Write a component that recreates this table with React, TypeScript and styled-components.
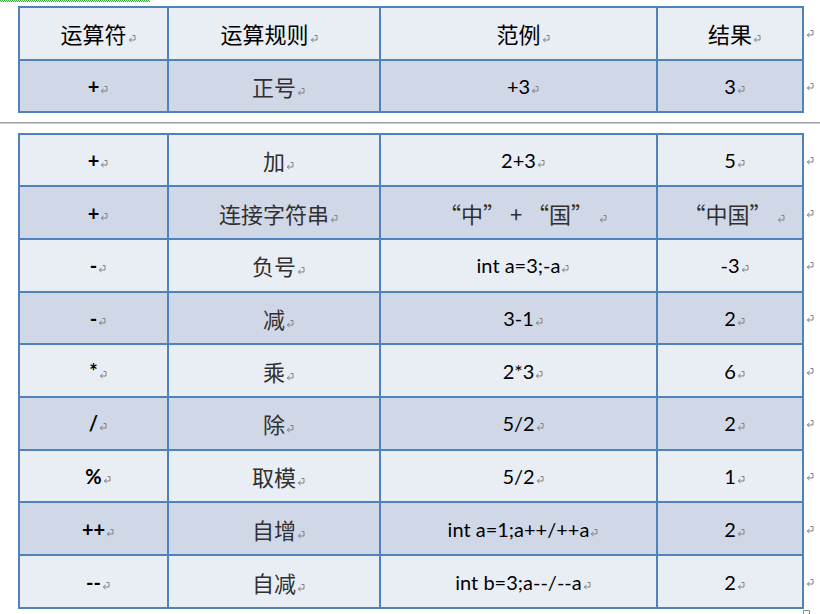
import React from 'react';
import styled, { createGlobalStyle } from 'styled-components';

const Global = createGlobalStyle`
  html, body { margin: 0; padding: 0; background: #ffffff; }
  body {
    width: 820px;
    height: 614px;
    overflow: hidden;
    font-family: Lato, "Noto Sans CJK SC", sans-serif;
  }
`;

const LIGHT = '#e9edf4';
const DARK = '#d0d8e8';
const BORDER = '#4f81bd';
const ROW_H = '50.7px';

const Page = styled.div`
  display: flex;
  flex-direction: column;
  width: 820px;
  height: 614px;
  overflow: hidden;
  & > * { flex-shrink: 0; }
`;

const Squiggle = styled.div`
  width: 150px;
  height: 2px;
  background:
    repeating-linear-gradient(90deg, #3fa63f 0 1px, #cfe9c6 1px 2px) top left / 100% 1px no-repeat,
    repeating-linear-gradient(90deg, #cfe9c6 0 1px, #3fa63f 1px 2px) bottom left / 100% 1px no-repeat;
`;

const TableBlock = styled.div<{ $top: number }>`
  display: flex;
  align-items: flex-start;
  margin-left: 18px;
  margin-top: ${(p) => p.$top}px;
`;

const Grid = styled.div`
  display: grid;
  grid-template-columns: 147px 210px 275px 144px;
  grid-auto-rows: ${ROW_H};
  gap: 2px;
  padding: 2px;
  background: ${BORDER};
`;

const Cell = styled.div<{ $dark: boolean; $nudge?: number }>`
  display: flex;
  align-items: center;
  justify-content: center;
  background: ${(p) => (p.$dark ? DARK : LIGHT)};
  padding-right: ${(p) => p.$nudge ?? 0}px;
  white-space: nowrap;
`;

const MarkCol = styled.div`
  display: grid;
  grid-auto-rows: ${ROW_H};
  gap: 2px;
  padding: 2px 0 2px 1px;
`;

const MarkSlot = styled.div`
  display: flex;
  align-items: center;
  padding-top: 2px;
`;

const Cjk = styled.span<{ $head?: boolean }>`
  font-family: "Noto Sans CJK SC", sans-serif;
  font-size: 22px;
  line-height: 1;
  font-weight: 400;
  color: ${(p) => (p.$head ? '#000000' : '#303030')};
`;

const Latin = styled.span<{ $bold?: boolean }>`
  font-family: Lato, "Noto Sans CJK SC", sans-serif;
  font-size: 20px;
  line-height: 1;
  font-weight: ${(p) => (p.$bold ? 700 : 400)};
  color: #000000;
`;

const MarkHolder = styled.span`
  display: inline-block;
  width: 0;
  white-space: nowrap;
  vertical-align: baseline;
`;

const MarkSvg = styled.svg`
  display: inline-block;
  margin-left: 1px;
  vertical-align: baseline;
`;

const Break = styled.div`
  height: 2px;
  margin: 8.6px 0 8.7px;
  background: linear-gradient(#9e9ea6 0 1px, #c9c9cf 1px 2px);
`;

const EndRow = styled.div`
  padding-left: 803px;
  margin-top: 1px;
  display: flex;
`;

const ReturnIcon: React.FC = () => (
  <MarkSvg width="8" height="8" viewBox="0 0 8 8">
    <path d="M4.5 0.5 H7 V5 H1.5" fill="none" stroke="#808080" strokeWidth="1" />
    <path d="M3.5 3 L1.2 5 L3.5 7" fill="none" stroke="#808080" strokeWidth="1" />
  </MarkSvg>
);

const Mark: React.FC = () => (
  <MarkHolder>
    <ReturnIcon />
  </MarkHolder>
);

type Kind = 'cjk' | 'lat';
interface CellData {
  text: string;
  kind: Kind;
  nudge?: number;
}

interface RowData {
  cells: CellData[];
}

const c = (text: string, nudge?: number): CellData => ({ text, kind: 'cjk', nudge });
const l = (text: string): CellData => ({ text, kind: 'lat' });

const headerRows: RowData[] = [
  { cells: [c('运算符'), c('运算规则', 19), c('范例'), c('结果')] },
  { cells: [l('+'), c('正号'), l('+3'), l('3')] },
];

const bodyRows: RowData[] = [
  { cells: [l('+'), c('加'), l('2+3'), l('5')] },
  { cells: [l('+'), c('连接字符串'), c('“中” + “国” '), c('“中国” ')] },
  { cells: [l('-'), c('负号'), l('int a=3;-a'), l('-3')] },
  { cells: [l('-'), c('减'), l('3-1'), l('2')] },
  { cells: [l('*'), c('乘'), l('2*3'), l('6')] },
  { cells: [l('/'), c('除'), l('5/2'), l('2')] },
  { cells: [l('%'), c('取模'), l('5/2'), l('1')] },
  { cells: [l('++'), c('自增'), l('int a=1;a++/++a'), l('2')] },
  { cells: [l('--'), c('自减'), l('int b=3;a--/--a'), l('2')] },
];

const CellText: React.FC<{ data: CellData; head: boolean; first: boolean }> = ({ data, head, first }) => {
  if (data.kind === 'cjk') {
    return (
      <Cjk $head={head}>
        {data.text}
        <Mark />
      </Cjk>
    );
  }
  return (
    <Latin $bold={first}>
      {data.text}
      <Mark />
    </Latin>
  );
};

const Table: React.FC<{ rows: RowData[]; top: number; withHeader: boolean }> = ({ rows, top, withHeader }) => (
  <TableBlock $top={top}>
    <Grid>
      {rows.map((row, ri) =>
        row.cells.map((cell, ci) => (
          <Cell key={`${ri}-${ci}`} $dark={ri % 2 === 1} $nudge={cell.nudge}>
            <CellText data={cell} head={withHeader && ri === 0} first={ci === 0} />
          </Cell>
        ))
      )}
    </Grid>
    <MarkCol>
      {rows.map((_, ri) => (
        <MarkSlot key={ri}>
          <ReturnIcon />
        </MarkSlot>
      ))}
    </MarkCol>
  </TableBlock>
);

const EndMark: React.FC = () => (
  <svg width="7" height="7" viewBox="0 0 7 7">
    <path d="M0.5 7 V0.5 H6.5 V7" fill="none" stroke="#8a8a8a" strokeWidth="1" />
  </svg>
);

export default function App() {
  return (
    <>
      <Global />
      <Page>
        <Squiggle />
        <Table rows={headerRows} top={4} withHeader />
        <Break />
        <Table rows={bodyRows} top={0} withHeader={false} />
        <EndRow>
          <EndMark />
        </EndRow>
      </Page>
    </>
  );
}
